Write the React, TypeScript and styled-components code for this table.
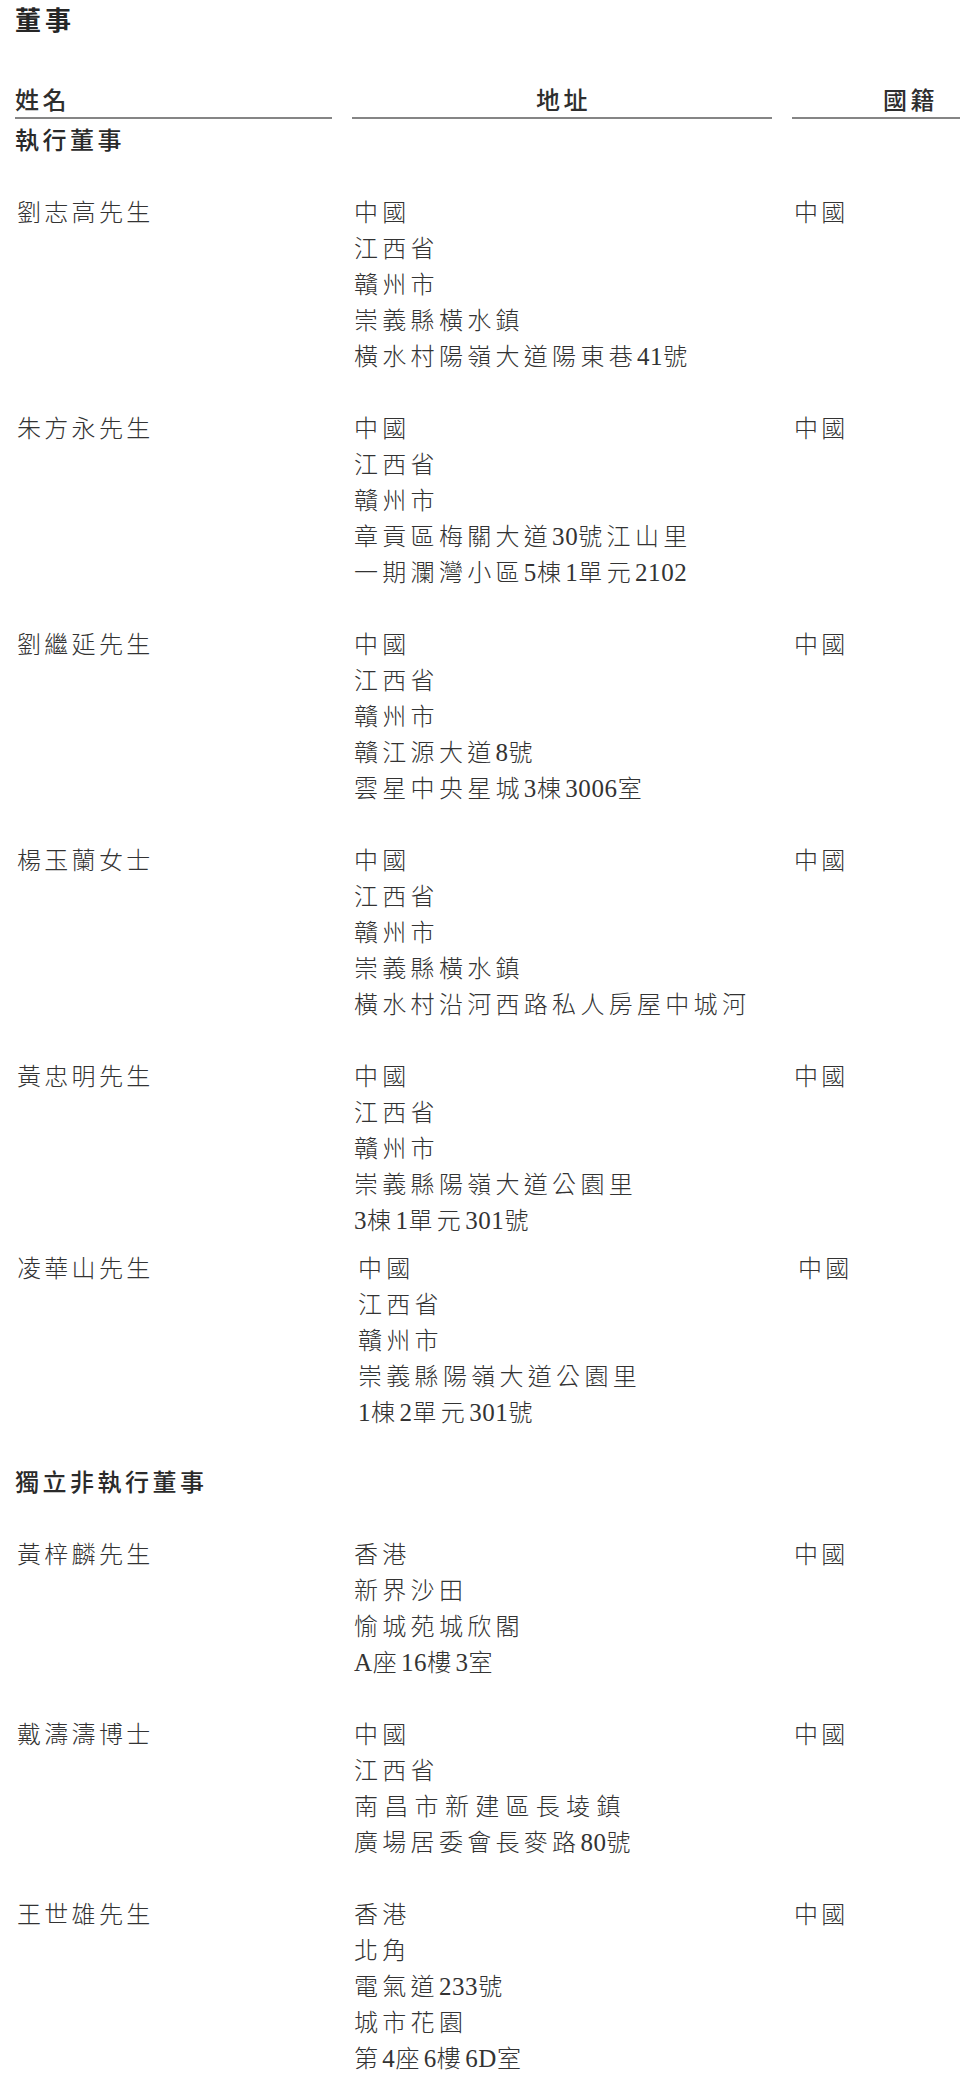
import { FC, Fragment } from 'react';
import styled, { createGlobalStyle } from 'styled-components';

type Director = {
  name: string;
  address: string[];
  nationality: string;
  gap?: number;
  shift?: number;
};

type Section = {
  title: string;
  directors: Director[];
};

const sections: Section[] = [
  {
    title: '執行董事',
    directors: [
      {
        name: '劉志高先生',
        address: ['中國', '江西省', '贛州市', '崇義縣橫水鎮', '橫水村陽嶺大道陽東巷41號'],
        nationality: '中國',
      },
      {
        name: '朱方永先生',
        address: ['中國', '江西省', '贛州市', '章貢區梅關大道30號江山里', '一期瀾灣小區5棟1單元2102'],
        nationality: '中國',
      },
      {
        name: '劉繼延先生',
        address: ['中國', '江西省', '贛州市', '贛江源大道8號', '雲星中央星城3棟3006室'],
        nationality: '中國',
      },
      {
        name: '楊玉蘭女士',
        address: ['中國', '江西省', '贛州市', '崇義縣橫水鎮', '橫水村沿河西路私人房屋中城河'],
        nationality: '中國',
      },
      {
        name: '黃忠明先生',
        address: ['中國', '江西省', '贛州市', '崇義縣陽嶺大道公園里', '3棟1單元301號'],
        nationality: '中國',
        gap: 12,
      },
      {
        name: '凌華山先生',
        address: ['中國', '江西省', '贛州市', '崇義縣陽嶺大道公園里', '1棟2單元301號'],
        nationality: '中國',
        gap: 32,
        shift: 4,
      },
    ],
  },
  {
    title: '獨立非執行董事',
    directors: [
      {
        name: '黃梓麟先生',
        address: ['香港', '新界沙田', '愉城苑城欣閣', 'A座16樓3室'],
        nationality: '中國',
      },
      {
        name: '戴濤濤博士',
        address: ['中國', '江西省', '南昌市新建區長堎鎮', '廣場居委會長麥路80號'],
        nationality: '中國',
      },
      {
        name: '王世雄先生',
        address: ['香港', '北角', '電氣道233號', '城市花園', '第4座6樓6D室'],
        nationality: '中國',
      },
    ],
  },
];

// lines the printed page sets wider than the rest
const WIDE_LINES = new Set(['南昌市新建區長堎鎮']);

const GlobalStyle = createGlobalStyle`
  body {
    margin: 0;
    background: #ffffff;
  }
`;

const Page = styled.div`
  width: 960px;
  box-sizing: border-box;
  padding: 1px 0 0 15px;
`;

const Title = styled.div`
  font-family: 'Noto Sans CJK TC', sans-serif;
  font-weight: 700;
  font-size: 26px;
  line-height: 36px;
  letter-spacing: 4px;
  color: #262626;
  margin-bottom: 44px;
`;

const Columns = styled.div`
  display: grid;
  grid-template-columns: 317px 420px 168px;
  column-gap: 20px;
`;

const HeadCell = styled.div<{ $align: 'left' | 'center' | 'right' }>`
  font-family: 'Noto Sans CJK TC', sans-serif;
  font-weight: 500;
  font-size: 24px;
  line-height: 36px;
  letter-spacing: 3.5px;
  color: #2e2e2e;
  text-align: ${p => p.$align};
  padding: ${p => (p.$align === 'right' ? '0 22px 0 0' : p.$align === 'center' ? '0 0 0 3px' : '0')};
  border-bottom: 2px solid #858585;
`;

const SectionHeading = styled.div`
  font-family: 'Noto Sans CJK TC', sans-serif;
  font-weight: 500;
  font-size: 24px;
  line-height: 36px;
  letter-spacing: 3.5px;
  color: #2a2a2a;
  margin: 2px 0 38px;
`;

const Row = styled(Columns)<{ $gap: number }>`
  margin-bottom: ${p => p.$gap}px;
`;

const Cell = styled.div<{ $shift?: number }>`
  display: flex;
  flex-direction: column;
  padding-left: ${p => 2 + (p.$shift || 0)}px;
`;

const Line = styled.div<{ $spacing: number }>`
  font-family: 'Liberation Serif', 'Noto Sans CJK TC', serif;
  font-weight: 300;
  font-size: 24px;
  line-height: 36px;
  letter-spacing: ${p => p.$spacing}px;
  color: #333333;
  white-space: nowrap;
`;

const Num = styled.span`
  letter-spacing: 0.6px;
  font-size: 25px;
`;

// latin and digit runs are set tight, as in the printed page
const Text: FC<{ children: string }> = ({ children }) => {
  const parts = children.split(/([0-9A-Z]+)/);
  return (
    <>
      {parts.map((part, i) =>
        i % 2 === 1 ? <Num key={i}>{part}</Num> : <Fragment key={i}>{part}</Fragment>
      )}
    </>
  );
};

const DirectorRow: FC<{ director: Director }> = ({ director }) => (
  <Row $gap={director.gap ?? 36}>
    <Cell>
      <Line $spacing={3.3}>{director.name}</Line>
    </Cell>
    <Cell $shift={director.shift}>
      {director.address.map(line => (
        <Line key={line} $spacing={WIDE_LINES.has(line) ? 6.3 : 4.3}>
          <Text>{line}</Text>
        </Line>
      ))}
    </Cell>
    <Cell $shift={director.shift}>
      <Line $spacing={3.3}>{director.nationality}</Line>
    </Cell>
  </Row>
);

export default function App() {
  return (
    <>
      <GlobalStyle />
      <Page>
        <Title>董事</Title>
        <Columns>
          <HeadCell $align="left">姓名</HeadCell>
          <HeadCell $align="center">地址</HeadCell>
          <HeadCell $align="right">國籍</HeadCell>
        </Columns>
        {sections.map(section => (
          <Fragment key={section.title}>
            <SectionHeading>{section.title}</SectionHeading>
            {section.directors.map(d => (
              <DirectorRow key={d.name} director={d} />
            ))}
          </Fragment>
        ))}
      </Page>
    </>
  );
}
